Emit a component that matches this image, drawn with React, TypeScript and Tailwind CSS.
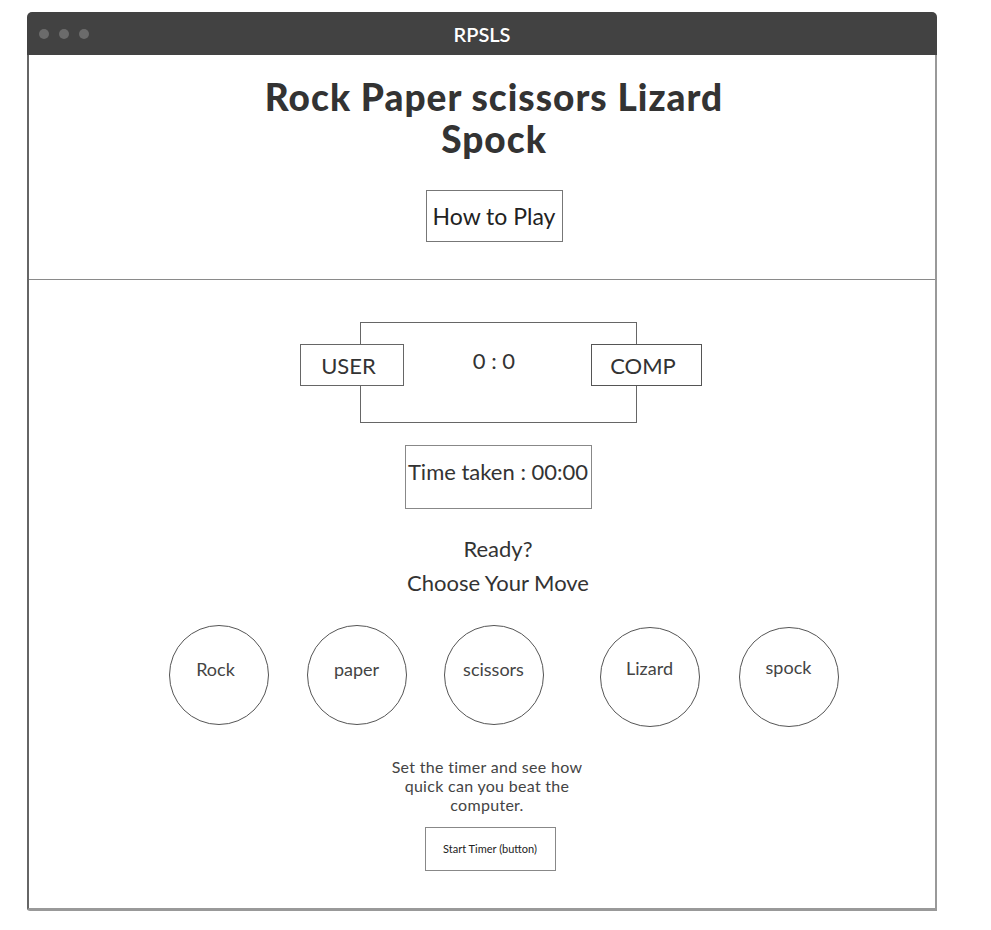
import * as React from 'react'

const moves = [
  { label: 'Rock', cls: 'mt-0 pt-[31px] pr-[6px]' },
  { label: 'paper', cls: 'mt-0 ml-[38px] pt-[31px]' },
  { label: 'scissors', cls: 'mt-0 ml-[37px] pt-[31px]' },
  { label: 'Lizard', cls: 'mt-[2px] ml-[56px] pt-[28px]' },
  { label: 'spock', cls: 'mt-[2px] ml-[39px] pt-[27px]' },
]

function Dots() {
  return (
    <div className="absolute left-[12px] top-1/2 -translate-y-1/2 flex gap-[10px]">
      <span className="w-[10px] h-[10px] rounded-full bg-[#6b6b6b]" />
      <span className="w-[10px] h-[10px] rounded-full bg-[#6b6b6b]" />
      <span className="w-[10px] h-[10px] rounded-full bg-[#6b6b6b]" />
    </div>
  )
}

export default function App() {
  return (
    <div className="min-h-[930px] bg-white pt-3 pl-[27px] text-[#333]" style={{ fontFamily: 'Lato, "Noto Sans", sans-serif' }}>
      <div className="w-[910px]">
        {/* title bar */}
        <div className="relative h-[43px] rounded-t-[5px] bg-[#424242] flex items-center justify-center">
          <Dots />
          <span className="text-white text-[20px] font-semibold">RPSLS</span>
        </div>

        <div className="border-l-2 border-l-[#666] border-r-2 border-r-[#999] border-b-[3px] border-b-[#999] rounded-bl-[3px]">
          {/* header */}
          <header className="h-[225px] border-b border-b-[#8a8a8a] flex flex-col items-center pt-[21px]">
            <h1 className="ml-[24px] text-[37px] leading-[42px] tracking-[1px] font-black text-center text-[#333]">
              Rock Paper scissors Lizard
              <br />
              Spock
            </h1>
            <button className="ml-[24px] mt-[30px] w-[137px] h-[52px] border border-[#777] text-[23px] text-[#222] bg-white">
              How to Play
            </button>
          </header>

          {/* game area */}
          <main className="h-[628px] flex flex-col items-center pt-[42px]">
            {/* scoreboard */}
            <div className="ml-[37px] relative w-[402px] h-[101px]">
              <div className="absolute left-[60px] top-0 w-[277px] h-[101px] border border-[#666] flex justify-center pt-[24px]">
                <span className="text-[22px] leading-[28px] -ml-[8px]">0 : 0</span>
              </div>
              <div className="absolute left-0 top-[22px] w-[104px] h-[42px] border border-[#666] bg-white flex items-center justify-center pr-[6px] text-[22px]">
                USER
              </div>
              <div className="absolute left-[291px] top-[22px] w-[111px] h-[42px] border border-[#555] bg-white flex items-center justify-center pr-[6px] text-[22px]">
                COMP
              </div>
            </div>

            <div className="ml-[32px] mt-[22px] w-[187px] h-[64px] border border-[#888] flex items-start justify-center pt-[12px] text-[22px] leading-[28px]">
              Time taken : 00:00
            </div>

            <div className="ml-[32px] mt-[23px] text-[22px] leading-[34px] text-center">
              <div>Ready?</div>
              <div>Choose Your Move</div>
            </div>

            {/* moves */}
            <div className="mt-[25px] ml-[43px] flex items-start">
              {moves.map((m) => (
                <button
                  key={m.label}
                  className={`w-[100px] h-[100px] rounded-full border border-[#555] bg-white flex justify-center text-[18px] leading-[24px] text-[#444] ${m.cls}`}
                >
                  {m.label}
                </button>
              ))}
            </div>

            <p className="ml-[10px] mt-[30px] text-[16px] leading-[19px] tracking-[0.3px] text-center text-[#444]">
              Set the timer and see how
              <br />
              quick can you beat the
              <br />
              computer.
            </p>

            <button className="ml-[16px] mt-[13px] w-[131px] h-[44px] border border-[#888] bg-white text-[11px] text-[#222]">
              Start Timer (button)
            </button>
          </main>
        </div>
      </div>
    </div>
  )
}
